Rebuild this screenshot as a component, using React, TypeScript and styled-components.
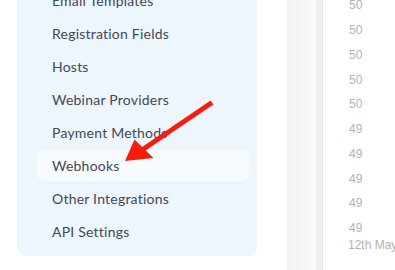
import React from "react";
import styled, { createGlobalStyle } from "styled-components";

const Global = createGlobalStyle`
  html, body { margin: 0; padding: 0; background: #ffffff; overflow: hidden; }
  body { width: 395px; height: 270px; }
`;

const Page = styled.div`
  position: relative;
  display: flex;
  align-items: flex-start;
  width: 395px;
  height: 270px;
  overflow: hidden;
  background: #ffffff;
`;

const SideColumn = styled.div`
  padding-left: 17px;
  flex: none;
`;

const Panel = styled.nav`
  width: 240px;
  box-sizing: border-box;
  margin-top: -15px;
  padding: 0 8px 9px 20px;
  background: #edf5fd;
  border-radius: 0 0 9px 9px;
  display: flex;
  flex-direction: column;
  gap: 2px;
`;

const NavItem = styled.div<{ $active?: boolean }>`
  height: 31px;
  display: flex;
  align-items: center;
  padding-left: 15px;
  border-radius: 7px;
  background: ${(p) => (p.$active ? "#f7fbfe" : "transparent")};
  font-family: Lato, "Open Sans", sans-serif;
  font-size: 14px;
  letter-spacing: 0.22px;
  color: #434857;
  white-space: nowrap;
`;

const Band = styled.div`
  margin-left: 30px;
  width: 29px;
  height: 270px;
  flex: none;
  background: linear-gradient(to right, #f2f2f2, #fafafa);
`;

const Strip = styled.div`
  width: 6px;
  height: 270px;
  flex: none;
  background: #efeff1;
  border-right: 1px solid #e1e1e3;
`;

const Chart = styled.div`
  flex: 1;
  padding-left: 26px;
  margin-top: -6.7px;
  display: flex;
  flex-direction: column;
  font-family: "Liberation Sans", Arial, sans-serif;
  font-size: 12px;
  color: #b2b2b2;
`;

const Value = styled.div`
  height: 24.75px;
  line-height: 24.75px;
`;

const DateLabel = styled.div`
  line-height: 14px;
  margin-top: -2.7px;
  margin-left: -1px;
  white-space: nowrap;
`;

const ArrowLayer = styled.svg`
  position: absolute;
  left: 0;
  top: 0;
  pointer-events: none;
`;

const items = [
  "Email Templates",
  "Registration Fields",
  "Hosts",
  "Webinar Providers",
  "Payment Methods",
  "Webhooks",
  "Other Integrations",
  "API Settings",
];

const values = [50, 50, 50, 50, 50, 49, 49, 49, 49, 49];

export default function App() {
  return (
    <>
      <Global />
      <Page>
        <SideColumn>
          <Panel>
            {items.map((t) => (
              <NavItem key={t} $active={t === "Webhooks"}>
                {t}
              </NavItem>
            ))}
          </Panel>
        </SideColumn>
        <Band />
        <Strip />
        <Chart>
          {values.map((v, i) => (
            <Value key={i}>{v}</Value>
          ))}
          <DateLabel>12th May</DateLabel>
        </Chart>
        <ArrowLayer width="395" height="270" viewBox="0 0 395 270">
          <line x1="212" y1="102.5" x2="142" y2="150" stroke="#f71c0c" strokeWidth="5" />
          <polygon points="125,161 134.5,139.5 153.5,158" fill="#f71c0c" />
        </ArrowLayer>
      </Page>
    </>
  );
}
